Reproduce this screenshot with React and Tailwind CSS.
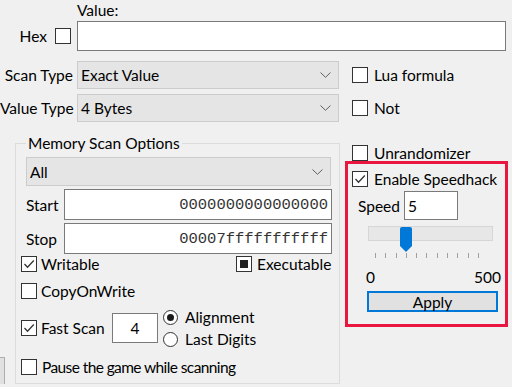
import React from "react";

// small win32-style widgets
const Check = ({ checked = false, mixed = false }) => (
  <span className="w-[16px] h-[16px] border border-[#333333] bg-white flex items-center justify-center shrink-0">
    {checked && (
      <svg width="14" height="14" viewBox="0 0 14 14">
        <polyline
          points="2.5,7 5.5,10.2 11.8,3.5"
          fill="none"
          stroke="#333333"
          strokeWidth="1.3"
        />
      </svg>
    )}
    {mixed && <span className="w-[8px] h-[8px] bg-[#222222]" />}
  </span>
);

const Radio = ({ selected = false }) => (
  <span className="w-[15px] h-[15px] rounded-full border border-[#333333] bg-white flex items-center justify-center shrink-0">
    {selected && <span className="w-[7px] h-[7px] rounded-full bg-[#1a1a1a]" />}
  </span>
);

const Chevron = () => (
  <svg width="11" height="6" viewBox="0 0 11 6" className="shrink-0">
    <polyline points="0.5,0.5 5.5,5.3 10.5,0.5" fill="none" stroke="#606060" strokeWidth="1" />
  </svg>
);

const Select = ({ value, className }) => (
  <div
    className={`h-[28px] bg-[#e5e5e5] border border-[#cccccc] flex items-center justify-between pl-[3px] pr-[7px] ${className}`}
  >
    <span>{value}</span>
    <Chevron />
  </div>
);

const ticks = [0, 1, 2, 3, 4, 5, 6, 7, 8, 9, 10];

export default function App() {
  return (
    <div className="w-[512px] h-[387px] bg-[#f0f0f0] overflow-hidden text-black text-[15.5px] leading-[20px] font-['Lato',sans-serif]">
      {/* Value row */}
      <div className="h-[21px] pl-[77px] flex items-start">Value:</div>
      <div className="flex h-[30px]">
        <div className="w-[77px] flex items-center justify-end gap-[8px] pr-[6px]">
          <span>Hex</span>
          <Check />
        </div>
        <div className="w-[429px] h-[30px] bg-white border border-[#7a7a7a]" />
      </div>

      {/* Scan type / value type */}
      <div className="flex items-center mt-[10px]">
        <div className="w-[77px] text-right pr-[4px] whitespace-nowrap">Scan Type</div>
        <Select value="Exact Value" className="w-[262px]" />
        <div className="flex items-center gap-[6px] ml-[13px]">
          <Check />
          <span>Lua formula</span>
        </div>
      </div>
      <div className="flex items-center mt-[5px]">
        <div className="w-[77px] text-right pr-[4px] whitespace-nowrap">Value Type</div>
        <Select value="4 Bytes" className="w-[262px]" />
        <div className="flex items-center gap-[6px] ml-[13px]">
          <Check />
          <span>Not</span>
        </div>
      </div>

      {/* lower area */}
      <div className="flex mt-[11px]">
        <div className="w-[15px] flex flex-col justify-end">
          <div className="w-[5px] h-[27px] bg-[#e1e1e1] border-t border-r border-[#adadad]" />
        </div>

        <fieldset className="w-[325px] border border-[#dcdcdc] pb-[6px]">
          <legend className="ml-[10px] px-[2px]">Memory Scan Options</legend>

          <Select value="All" className="w-[305px] h-[29px] ml-[10px] mt-[4px]" />

          <div className="flex items-center mt-[3px] ml-[10px]">
            <span className="w-[38px]">Start</span>
            <div className="w-[268px] h-[31px] bg-white border border-[#7a7a7a] flex items-center justify-end pr-[3px] text-[15.5px] text-[#333333] font-['Liberation_Mono',monospace]">
              0000000000000000
            </div>
          </div>
          <div className="flex items-center mt-[3px] ml-[10px]">
            <span className="w-[38px]">Stop</span>
            <div className="w-[268px] h-[31px] bg-white border border-[#7a7a7a] flex items-center justify-end pr-[3px] text-[15.5px] text-[#333333] font-['Liberation_Mono',monospace]">
              00007fffffffffff
            </div>
          </div>

          <div className="flex items-center h-[20px] ml-[5px]">
            <div className="flex items-center gap-[4px] w-[215px]">
              <Check checked />
              <span>Writable</span>
            </div>
            <div className="flex items-center gap-[5px]">
              <Check mixed />
              <span>Executable</span>
            </div>
          </div>

          <div className="flex items-center gap-[4px] h-[20px] mt-[7px] ml-[5px]">
            <Check />
            <span>CopyOnWrite</span>
          </div>

          <div className="flex items-center h-[40px] mt-[7px] ml-[5px]">
            <div className="flex items-center gap-[4px] w-[91px]">
              <Check checked />
              <span>Fast Scan</span>
            </div>
            <div className="w-[46px] h-[30px] bg-white border border-[#7a7a7a] flex items-center justify-center">
              4
            </div>
            <div className="flex flex-col gap-[4px] ml-[5px]">
              <div className="flex items-center gap-[7px] h-[18px]">
                <Radio selected />
                <span>Alignment</span>
              </div>
              <div className="flex items-center gap-[7px] h-[18px]">
                <Radio />
                <span>Last Digits</span>
              </div>
            </div>
          </div>

          <div className="flex items-center gap-[5px] h-[20px] mt-[9px] ml-[5px]">
            <Check />
            <span className="tracking-[-0.6px]">Pause the game while scanning</span>
          </div>
        </fieldset>

        {/* right column */}
        <div className="ml-[5px] w-[165px]">
          <div className="flex items-center gap-[6px] h-[16px] mt-[12px] pl-[7px]">
            <Check />
            <span>Unrandomizer</span>
          </div>

          <div className="w-[163px] border-[3px] border-[#e91640] pb-[12px]">
            <div className="flex items-center gap-[6px] h-[16px] mt-[7px] pl-[4px]">
              <Check checked />
              <span>Enable Speedhack</span>
            </div>
            <div className="flex items-center mt-[4px] pl-[10px]">
              <span className="w-[46px]">Speed</span>
              <div className="w-[54px] h-[29px] bg-white border border-[#7a7a7a] flex items-center pl-[3px]">
                5
              </div>
            </div>

            {/* trackbar */}
            <div className="relative h-[27px] mt-[6px] ml-[20px] w-[125px]">
              <div className="mt-[4px] h-[15px] bg-[#e7e7e7] border border-[#d6d6d6]" />
              <svg
                width="14"
                height="26"
                viewBox="0 0 14 26"
                className="absolute left-[31px] top-[1px]"
              >
                <path d="M1,2 Q1,0 3,0 L11,0 Q13,0 13,2 L13,19 L7,25 L1,19 Z" fill="#0078d7" />
              </svg>
            </div>
            <div className="flex justify-between w-[104px] ml-[27px] h-[5px]">
              {ticks.map((t) => (
                <span key={t} className="w-[1px] h-[5px] bg-[#a0a0a0]" />
              ))}
            </div>

            <div className="flex justify-between items-center h-[20px] mt-[9px] ml-[18px] w-[135px]">
              <span>0</span>
              <span>500</span>
            </div>
            <div className="ml-[19px] mt-[4px] w-[131px] h-[21px] bg-[#e1e1e1] border-2 border-[#0078d7] flex items-center justify-center">
              Apply
            </div>
          </div>
        </div>
      </div>
    </div>
  );
}
